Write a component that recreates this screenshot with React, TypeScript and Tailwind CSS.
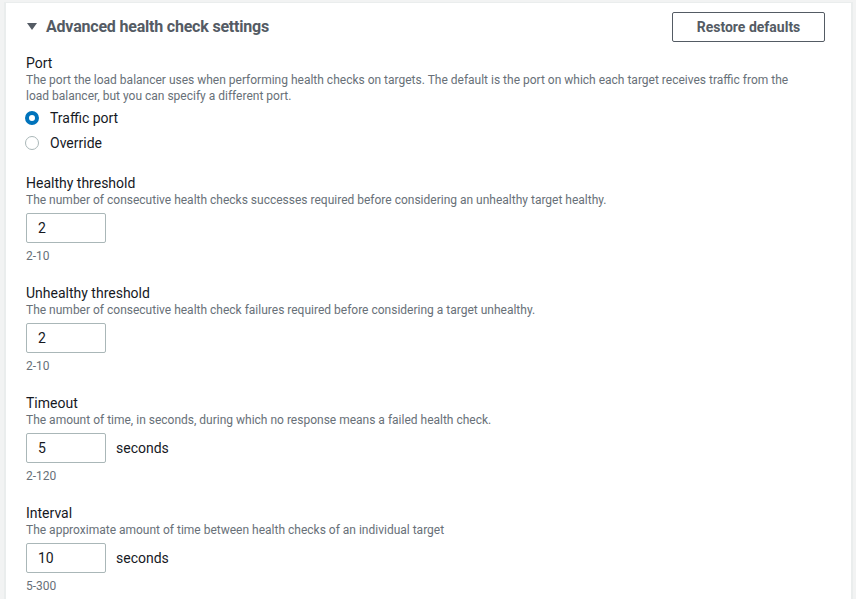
function Field({
  label,
  description,
  value,
  hint,
  unit,
}: {
  label: string;
  description: string;
  value: string;
  hint: string;
  unit?: string;
}) {
  return (
    <div className="flex flex-col">
      <div className="text-[14px] leading-[18px] text-[#16191f]">{label}</div>
      <div className="text-[12px] leading-[16px] text-[#687078]">{description}</div>
      <div className="mt-[5px] flex items-center">
        <div className="w-[80px] h-[30px] border border-[#aab7b8] rounded-[2px] px-[11px] flex items-center text-[14px] text-[#16191f]">
          {value}
        </div>
        {unit && <span className="ml-[10px] text-[14px] text-[#16191f]">{unit}</span>}
      </div>
      <div className="mt-[5px] text-[12px] leading-[16px] text-[#687078]">{hint}</div>
    </div>
  );
}

export default function App() {
  return (
    <div className="w-[856px] h-[599px] bg-[#f2f3f3] pl-[4px] pr-[3px] pt-[2px] overflow-hidden font-['Roboto',sans-serif]">
      <div className="h-full bg-white border-l-2 border-t border-r-2 border-[#eaeded] pl-[20px] pr-[26px]">
        {/* Header */}
        <div className="flex items-center justify-between pt-[9px]">
          <div className="flex items-center">
            <svg className="w-[10px] h-[8px] ml-[1px]" viewBox="0 0 10 8">
              <path d="M0 0h10L5 7z" fill="#545b64" />
            </svg>
            <span className="ml-[9px] text-[16px] font-bold text-[#545b64] tracking-[-0.2px]">Advanced health check settings</span>
          </div>
          <button className="w-[153px] h-[30px] border border-[#545b64] rounded-[2px] text-[14px] font-bold text-[#545b64]">
            Restore defaults
          </button>
        </div>

        {/* Port */}
        <div className="mt-[12px] flex flex-col">
          <div className="text-[14px] leading-[18px] text-[#16191f]">Port</div>
          <div className="text-[12px] leading-[16px] text-[#687078] pr-[16px]">
            The port the load balancer uses when performing health checks on targets. The default is the port on which each target receives traffic from the load balancer, but you can specify a different port.
          </div>
          <div className="mt-[4px] flex flex-col gap-[5px]">
            <label className="flex items-center h-[20px]">
              <span className="w-[14px] h-[14px] rounded-full border-[4px] border-[#0073bb] bg-white ml-[-1px]" />
              <span className="ml-[11px] text-[14px] text-[#16191f]">Traffic port</span>
            </label>
            <label className="flex items-center h-[20px]">
              <span className="w-[14px] h-[14px] rounded-full border border-[#aab7b8] bg-white ml-[-1px]" />
              <span className="ml-[11px] text-[14px] text-[#16191f]">Override</span>
            </label>
          </div>
        </div>

        <div className="mt-[21px] flex flex-col gap-[20px]">
          <Field
            label="Healthy threshold"
            description="The number of consecutive health checks successes required before considering an unhealthy target healthy."
            value="2"
            hint="2-10"
          />
          <Field
            label="Unhealthy threshold"
            description="The number of consecutive health check failures required before considering a target unhealthy."
            value="2"
            hint="2-10"
          />
          <Field
            label="Timeout"
            description="The amount of time, in seconds, during which no response means a failed health check."
            value="5"
            hint="2-120"
            unit="seconds"
          />
          <Field
            label="Interval"
            description="The approximate amount of time between health checks of an individual target"
            value="10"
            hint="5-300"
            unit="seconds"
          />
        </div>
      </div>
    </div>
  );
}
